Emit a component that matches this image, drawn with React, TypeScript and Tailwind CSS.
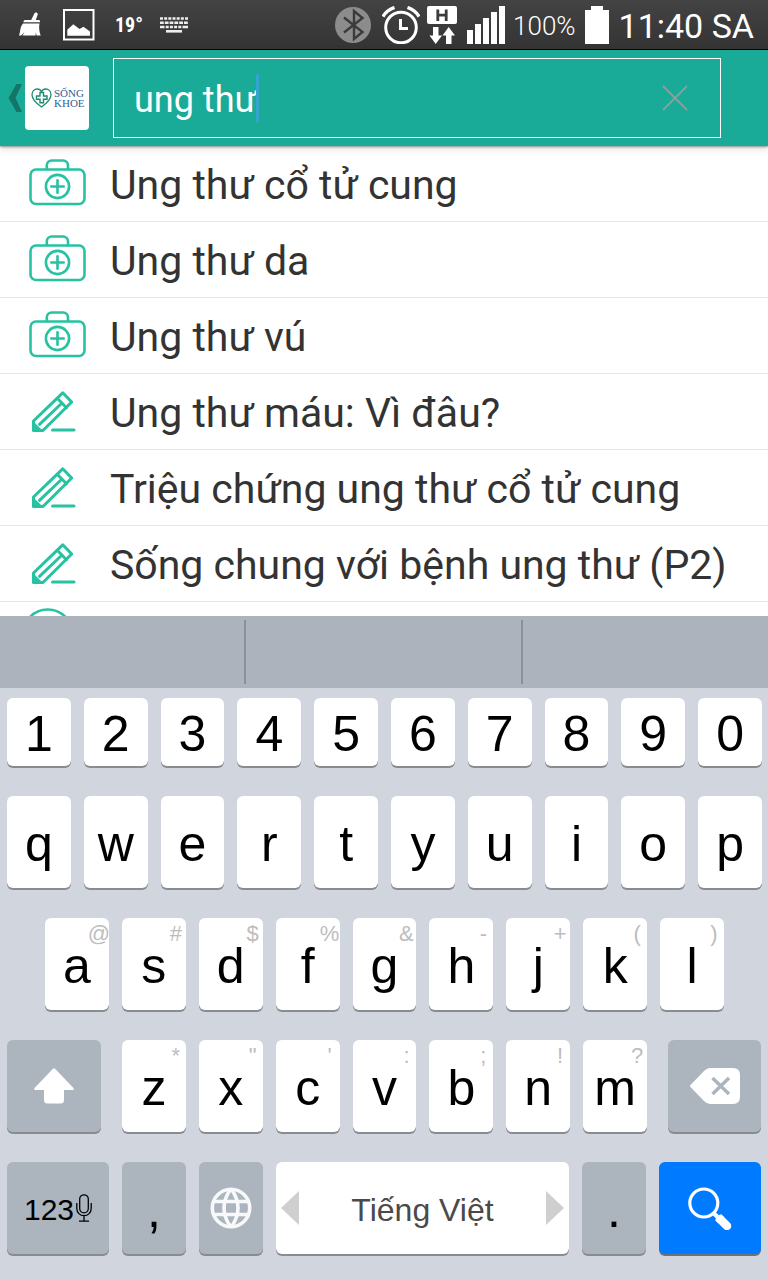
import React from "react";

type ResultKind = "disease" | "article" | "question";

const results: { kind: ResultKind; title: string }[] = [
  { kind: "disease", title: "Ung thư cổ tử cung" },
  { kind: "disease", title: "Ung thư da" },
  { kind: "disease", title: "Ung thư vú" },
  { kind: "article", title: "Ung thư máu: Vì đâu?" },
  { kind: "article", title: "Triệu chứng ung thư cổ tử cung" },
  { kind: "article", title: "Sống chung với bệnh ung thư (P2)" },
  { kind: "question", title: "" },
];

const digits = ["1", "2", "3", "4", "5", "6", "7", "8", "9", "0"];
const topRow = ["q", "w", "e", "r", "t", "y", "u", "i", "o", "p"];
const homeRow = [
  ["a", "@"],
  ["s", "#"],
  ["d", "$"],
  ["f", "%"],
  ["g", "&"],
  ["h", "-"],
  ["j", "+"],
  ["k", "("],
  ["l", ")"],
];
const bottomRow = [
  ["z", "*"],
  ["x", '"'],
  ["c", "'"],
  ["v", ":"],
  ["b", ";"],
  ["n", "!"],
  ["m", "?"],
];

function ResultIcon({ kind }: { kind: ResultKind }) {
  return (
    <svg
      className="w-[60px] h-12 shrink-0 overflow-visible"
      viewBox="0 1 60 48"
      fill="none"
      stroke="#26c2a1"
      strokeWidth="2.6"
      strokeLinecap="round"
    >
      {kind === "disease" && (
        <>
          <rect x="2.5" y="10.5" width="54" height="34.5" rx="5.5" />
          <path d="M18.8 10V6.500a5 5 0 0 1 5-5H35a5 5 0 0 1 5 5V10" />
          <circle cx="29.5" cy="27.5" r="11.6" />
          <path d="M29.5 21.3v12.4M23.3 27.5h12.4" />
        </>
      )}
      {kind === "article" && (
        <>
          <path d="M5.500 43.500V34L34.700 5.800l9 9.200L15 43.500z" strokeLinejoin="round" strokeWidth="3" />
          <path d="M29.500 11.500l9 9.200M11.500 37.300L34 16" strokeWidth="3" />
          <path d="M5 34l10 10H4z" fill="#26c2a1" stroke="none" />
          <path d="M24.500 43h21.500" strokeWidth="3" />
        </>
      )}
      {kind === "question" && <circle cx="19.7" cy="19.5" r="25" />}
    </svg>
  );
}

function StatusBar() {
  return (
    <div className="h-[50px] shrink-0 flex items-center justify-between pl-[18px] pr-[14px] bg-linear-to-b from-[#434343] to-[#343434] border-b border-black text-white">
      <div className="flex items-center">
        <svg className="w-6 h-[26px]" viewBox="0 0 24 26" fill="#fff">
          <path d="M16.500 1.300c1-1.500 3.800-.6 3.200 1.300L17.800 8H21c.8 0 1 .8 1 2.200H5.500C5.500 8.800 6 8 7 8h6.200z" />
          <path d="M5 11.500h16.500c-.8 3.500-.3 8 1.200 12h-4l-1.200-3 .2 3H4.500l2-3.500-3.300 3.500H1C2.500 20 1.800 15 5 11.500z" />
        </svg>
        <svg className="w-8 h-8 ml-[21px]" viewBox="0 0 32 32">
          <rect x="1" y="1" width="29.500" height="29.500" fill="none" stroke="#fff" strokeWidth="2" />
          <path d="M4.300 26.700v-6l6-5.500 6.200 4.800 4-2.300 6.500 4.800v4.200z" fill="#fff" />
        </svg>
        <span className="ml-5 w-6 text-[20px] leading-6 font-bold font-['Liberation_Sans_Narrow','Roboto_Condensed','Roboto',sans-serif]">
          19°
        </span>
        <svg className="w-7 h-4 ml-[21px]" viewBox="0 0 28 16" fill="none" stroke="#eee" strokeWidth="2.600">
          <path d="M0 1.500h28" strokeDasharray="3 1.170" />
          <path d="M0 5.700h28" strokeDasharray="3.800 1" />
          <path d="M0 10h28" strokeDasharray="4.500 1.200 3 1.200 3 1.200 3 1.200 3 1.200 6" />
          <path d="M6 14.300h16" />
        </svg>
      </div>
      <div className="flex items-center font-['Roboto',sans-serif]">
        <svg className="w-9 h-9" viewBox="0 0 36 36" fill="none">
          <circle cx="18" cy="18" r="18" fill="#8c8c8c" />
          <path d="M9 10.500L27.500 25 19 32V4l8.500 7L9 25.500" stroke="#3b3b3b" strokeWidth="2.400" />
        </svg>
        <svg className="w-[38px] h-[38px] ml-[11px]" viewBox="0 0 38 38" fill="none" stroke="#fff">
          <circle cx="19" cy="21.500" r="15.300" strokeWidth="3" />
          <path d="M18.500 13v9.500H26" strokeWidth="3" />
          <path d="M1 10.500Q5 4 12.500 1.500M25.500 1.500Q33 4 37 10.500" strokeWidth="3.400" />
        </svg>
        <svg className="w-[30px] h-[38px] ml-[7px]" viewBox="0 0 30 38">
          <rect width="30" height="18" rx="2" fill="#fff" />
          <path d="M10.800 3.500v11.500M19.200 3.500v11.500M10.800 9.200h8.400" stroke="#3b3b3b" strokeWidth="2.800" />
          <path d="M6 21h5.500v8.500h3.500L8.700 38 2.500 29.500H6zM19 38h5.500v-8.500H28L21.700 21l-6.200 8.500H19z" fill="#fff" />
        </svg>
        <svg className="w-[38px] h-[38px] ml-[10px]" viewBox="0 0 38 38" fill="#fff">
          <path d="M0 24h6v14H0zM8 18h6v20H8zM16 12h6v26h-6zM24 6h6v32h-6zM32 0h6v38h-6z" />
        </svg>
        <span className="ml-2 pt-0.5 text-[26px] leading-8 font-light">100%</span>
        <svg className="w-6 h-[38px] ml-[9px]" viewBox="0 0 24 38" fill="#fff">
          <path d="M6 0h12v4h6v34H0V4h6z" />
        </svg>
        <span className="ml-[10px] pt-0.5 text-[34px] leading-10">11:40 SA</span>
      </div>
    </div>
  );
}

function SearchHeader() {
  return (
    <header className="relative z-10 h-24 shrink-0 flex items-center pl-2 pr-[47px] bg-[#1aab98] shadow-[0_1px_2px_rgba(0,0,0,0.4),0_3px_8px_rgba(0,0,0,0.12)]">
      <button className="flex items-center gap-[3px]" aria-label="Quay lại">
        <svg className="w-[14px] h-7" viewBox="0 0 14 28" fill="#127567">
          <path d="M8.500 0H14L7.500 14 14 28H8.500L.5 14z" />
        </svg>
        <span className="w-16 h-16 rounded bg-white flex items-center pl-[6px] gap-[2px]">
          <svg className="w-[21px] h-5 shrink-0" viewBox="0 0 21 20" fill="none" stroke="#1d8a76">
            <path d="M10.500 19C4 14.500 1 11 1 6.800 1 3.500 3.200 1 6.200 1c2 0 3.500 1 4.300 2.600C11.300 2 12.800 1 14.800 1 17.800 1 20 3.500 20 6.800c0 4.200-3 7.700-9.500 12.200z" strokeWidth="1.300" />
            <path d="M9 4.500h3.500V8H16v3.200h-3.500v3.500H9v-3.500H5.500V8H9z" strokeWidth="1.400" />
          </svg>
          <span className="text-[11px] leading-[10px] text-left text-[#2f6095] font-['Liberation_Serif',serif]">
            SỐNG
            <br />
            KHOE
          </span>
        </span>
      </button>
      <div className="ml-6 flex-1 h-20 border border-white flex items-center pl-5 pr-8">
        <input
          type="text"
          aria-label="Tìm kiếm"
          defaultValue="ung thư"
          className="[field-sizing:content] pt-1 bg-transparent outline-none text-white text-[36px] leading-12 font-['Roboto',sans-serif]"
        />
        <span className="w-[3px] h-12 -ml-px bg-[#33a5cc]"></span>
        <button className="ml-auto" aria-label="Xóa">
          <svg className="w-[26px] h-[26px]" viewBox="0 0 26 26" stroke="#84a39e" strokeWidth="1.800">
            <path d="M1 1l24 24M25 1L1 25" />
          </svg>
        </button>
      </div>
    </header>
  );
}

function Key({ label, hint, gray }: { label: string; hint?: string; gray?: boolean }) {
  return (
    <button
      className={
        "relative flex-1 min-w-0 h-full pt-1 flex items-center justify-center rounded-md text-[50px] leading-none text-black shadow-[0_2px_0_#888c91] " +
        (gray ? "bg-[#acb4be]" : "bg-white")
      }
    >
      {label}
      {hint && (
        <span className="absolute top-0 right-0 w-5 flex justify-center text-[22px] leading-8 text-[#bdbdbd]">
          {hint}
        </span>
      )}
    </button>
  );
}

function Keyboard() {
  return (
    <div className="shrink-0 bg-[#d1d5dd] font-['Liberation_Sans',Arial,sans-serif]">
      <div className="h-[72px] grid grid-cols-[246fr_277fr_245fr] bg-[#acb3bd] py-1 items-center">
        <div className="h-full border-r-2 border-[#8a9199]"></div>
        <div className="h-full border-r-2 border-[#8a9199]"></div>
        <div></div>
      </div>
      <div className="flex flex-col gap-[30px] pt-[10px] pb-[26px] pl-[7px] pr-[6px]">
        <div className="flex gap-[13px] h-[68px]">
          {digits.map((d) => (
            <Key key={d} label={d} />
          ))}
        </div>
        <div className="flex gap-[13px] h-[92px]">
          {topRow.map((k) => (
            <Key key={k} label={k} />
          ))}
        </div>
        <div className="flex gap-[13px] h-[92px] px-[38px]">
          {homeRow.map(([k, h]) => (
            <Key key={k} label={k} hint={h} />
          ))}
        </div>
        <div className="flex gap-[21px] h-[92px] pr-px">
          <button
            aria-label="Shift"
            className="w-[94px] flex items-center justify-center rounded-md bg-[#acb4be] shadow-[0_2px_0_#888c91]"
          >
            <svg className="w-10 h-9" viewBox="0 0 40 36" fill="#fff">
              <path d="M19 .8q1-1 2 0L39.500 20q1 2-.8 2H30v10q0 3.500-3.500 3.500h-13Q10 35.500 10 32V22H1.300Q-.5 22 .5 20z" />
            </svg>
          </button>
          <div className="flex-1 flex gap-[13px]">
            {bottomRow.map(([k, h]) => (
              <Key key={k} label={k} hint={h} />
            ))}
          </div>
          <button
            aria-label="Xóa ký tự"
            className="w-[93px] flex items-center justify-center rounded-md bg-[#acb4be] shadow-[0_2px_0_#888c91]"
          >
            <svg className="w-[50px] h-9" viewBox="0 0 50 36">
              <path d="M.5 17L14 3q3-3 6-3h23q7 0 7 7v22q0 7-7 7H20q-3 0-6-3L.5 19q-1-1 0-2z" fill="#fff" />
              <path d="M22.500 10l16.500 16M39 10L22.500 26" stroke="#acb4be" strokeWidth="3.400" />
            </svg>
          </button>
        </div>
        <div className="flex gap-[13px] h-[92px] pr-px">
          <button
            aria-label="123"
            className="w-[102px] flex items-center justify-center gap-[2px] rounded-md bg-[#acb4be] shadow-[0_2px_0_#888c91] text-[30px] leading-8 text-black"
          >
            <span className="pt-1">123</span>
            <svg className="w-4 h-7" viewBox="0 0 16 28" fill="none" stroke="#000" strokeWidth="1.300">
              <rect x="3.700" y=".8" width="8.600" height="18" rx="4.300" />
              <path d="M.8 9v5.500a7.200 7.200 0 0 0 14.400 0V9M8 21.500V27M3 27.200h10" />
            </svg>
          </button>
          <div className="w-16 flex">
            <Key label="," gray />
          </div>
          <button
            aria-label="Ngôn ngữ"
            className="w-16 flex items-center justify-center rounded-md bg-[#acb4be] shadow-[0_2px_0_#888c91]"
          >
            <svg className="w-[42px] h-[42px]" viewBox="0 0 42 42" fill="none" stroke="#f8f9fa" strokeWidth="3.600">
              <circle cx="21" cy="21" r="18.700" />
              <path d="M5 14.500h32M5 27.500h32" />
              <path d="M20 3Q8 21 20 39M22 3q12 18 0 36" />
            </svg>
          </button>
          <button className="flex-1 px-[5px] flex items-center justify-between rounded-md bg-white shadow-[0_2px_0_#888c91] text-[32px] leading-10 text-[#4a4a4a]">
            <svg className="w-[18px] h-[34px]" viewBox="0 0 18 34" fill="#cfcfcf">
              <path d="M18 0v34L0 17z" />
            </svg>
            <span className="pt-1">Tiếng Việt</span>
            <svg className="w-[18px] h-[34px]" viewBox="0 0 18 34" fill="#cfcfcf">
              <path d="M0 0v34l18-17z" />
            </svg>
          </button>
          <div className="w-16 flex">
            <Key label="." gray />
          </div>
          <button
            aria-label="Tìm"
            className="w-[102px] flex items-center justify-center rounded-md bg-[#007aff] shadow-[0_2px_0_#6c7078]"
          >
            <svg className="w-11 h-11" viewBox="0 0 44 44" fill="none" stroke="#fff">
              <circle cx="15.800" cy="17" r="14" strokeWidth="3.200" />
              <path d="M25.500 27l5 5" strokeWidth="4" />
              <path d="M32 33l7 7" strokeWidth="8.500" strokeLinecap="round" />
              <path d="M30 31l3 3" strokeWidth="8.500" />
            </svg>
          </button>
        </div>
      </div>
    </div>
  );
}

export default function App() {
  return (
    <div className="h-screen flex flex-col bg-white overflow-hidden">
      <StatusBar />
      <SearchHeader />
      <ul className="flex-1 min-h-0 overflow-hidden bg-white">
        {results.map((r, i) => (
          <li
            key={i}
            className="h-[76px] pl-7 flex items-center gap-[22px] border-b border-[#e8e8e8] text-[41px] leading-12 text-[#333] whitespace-nowrap font-['Roboto',sans-serif]"
          >
            <ResultIcon kind={r.kind} />
            <span className="pt-0.5">{r.title}</span>
          </li>
        ))}
      </ul>
      <Keyboard />
    </div>
  );
}
